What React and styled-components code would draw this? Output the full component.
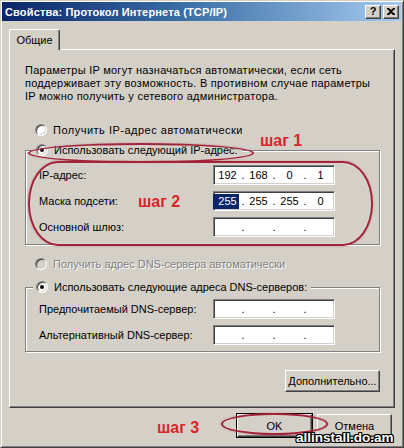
import React from 'react';
import styled, { createGlobalStyle } from 'styled-components';

const GlobalStyle = createGlobalStyle`
  html, body {
    margin: 0;
    padding: 0;
  }
  body {
    background: #d4d0c8;
    font-family: "Liberation Sans", Arial, sans-serif;
    font-size: 11px;
    color: #000;
  }
`;

const Window = styled.div`
  position: relative;
  width: 404px;
  height: 448px;
  box-sizing: border-box;
  background: #d4d0c8;
  border: 1px solid;
  border-color: #d4d0c8 #404040 #404040 #d4d0c8;
  box-shadow: inset 1px 1px #fff, inset -1px -1px #808080;
  padding: 1px 2px 2px 1px;
  display: flex;
  flex-direction: column;
  overflow: hidden;
`;

const TitleBar = styled.div`
  height: 19px;
  display: flex;
  align-items: center;
  padding: 0 2px 0 3px;
  background: linear-gradient(90deg, #0a246a 0%, #3a6ea5 45%, #a6caf0 100%);
`;

const Title = styled.div`
  flex: 1;
  color: #fff;
  font-weight: bold;
  font-size: 11px;
  letter-spacing: 0.15px;
  white-space: nowrap;
`;

const CaptionButton = styled.div`
  width: 16px;
  height: 14px;
  box-sizing: border-box;
  margin-left: ${p => p.$gap || 0}px;
  display: flex;
  align-items: center;
  justify-content: center;
  background: #d4d0c8;
  border: 1px solid;
  border-color: #fff #404040 #404040 #fff;
  box-shadow: inset -1px -1px #808080;
  font-weight: bold;
  font-size: 11px;
  line-height: 1;
`;

const Body = styled.div`
  display: flex;
  flex-direction: column;
  padding: 8px 6px 0 7px;
`;

const TabStrip = styled.div`
  display: flex;
`;

const Tab = styled.div`
  position: relative;
  z-index: 1;
  width: 51px;
  height: 21px;
  box-sizing: border-box;
  margin-bottom: -1px;
  display: flex;
  align-items: center;
  justify-content: center;
  background: #d4d0c8;
  border: 1px solid;
  border-color: #fff #404040 transparent #fff;
  border-bottom: none;
  border-radius: 2px 3px 0 0;
  box-shadow: inset -1px 0 #808080;
`;

const Panel = styled.div`
  height: 359px;
  box-sizing: border-box;
  display: flex;
  flex-direction: column;
  padding: 14px 14px 0 15px;
  border: 1px solid;
  border-color: #fff #404040 #404040 #fff;
  box-shadow: inset -1px -1px #808080;
`;

const Intro = styled.div`
  line-height: 13px;
  letter-spacing: 0.25px;
  white-space: nowrap;
`;

const RadioRow = styled.div`
  display: flex;
  align-items: center;
  height: 14px;
  margin-top: ${p => p.$top}px;
  margin-left: 10px;
  letter-spacing: ${p => p.$spread || 0}px;
  color: ${p => (p.$disabled ? '#808080' : '#000')};
  text-shadow: ${p => (p.$disabled ? '1px 1px 0 #fff' : 'none')};
  white-space: nowrap;
`;

const RadioDot = styled.span`
  position: relative;
  width: 12px;
  height: 12px;
  box-sizing: border-box;
  flex: none;
  margin-right: 6px;
  border-radius: 50%;
  background: ${p => (p.$disabled ? '#d4d0c8' : '#fff')};
  border: 1px solid;
  border-color: #808080 #fff #fff #808080;
  box-shadow: inset 1px 1px #404040, inset -1px -1px #d4d0c8;
  &::after {
    content: '';
    display: ${p => (p.$checked ? 'block' : 'none')};
    position: absolute;
    left: 3px;
    top: 3px;
    width: 4px;
    height: 4px;
    border-radius: 50%;
    background: #000;
  }
`;

const Group = styled.div`
  position: relative;
  margin-top: ${p => p.$top}px;
  padding: ${p => p.$pt}px 0 ${p => p.$pb}px 13px;
  display: flex;
  flex-direction: column;
  gap: 6px;
  border: 1px solid #808080;
  box-shadow: inset 1px 1px #fff, 1px 1px #fff;
`;

const Legend = styled.div`
  position: absolute;
  left: 7px;
  top: -8px;
  height: 14px;
  display: flex;
  align-items: center;
  padding: 0 4px 0 3px;
  background: #d4d0c8;
  white-space: nowrap;
`;

const FieldRow = styled.div`
  display: grid;
  grid-template-columns: 174px 122px;
  align-items: center;
`;

const IpBox = styled.div`
  height: 20px;
  box-sizing: border-box;
  display: grid;
  grid-template-columns: 23px 8px 23px 8px 23px 8px 23px;
  align-items: center;
  padding-left: 2px;
  background: #fff;
  border: 1px solid;
  border-color: #808080 #fff #fff #808080;
  box-shadow: inset 1px 1px #404040, inset -1px -1px #d4d0c8;
`;

const Seg = styled.span`
  text-align: center;
  line-height: 15px;
  color: ${p => (p.$selected ? '#fff' : '#000')};
  background: ${p => (p.$selected ? '#0a246a' : 'transparent')};
  margin-left: ${p => (p.$selected ? '-3px' : '0')};
  padding-left: ${p => (p.$selected ? '3px' : '0')};
`;

const Dot = styled.span`
  text-align: center;
`;

const Button = styled.div`
  width: ${p => p.$w}px;
  height: ${p => p.$h}px;
  box-sizing: border-box;
  display: flex;
  align-items: center;
  justify-content: center;
  background: #d4d0c8;
  border: 1px solid;
  border-color: #fff #404040 #404040 #fff;
  box-shadow: inset -1px -1px #808080;
  outline: ${p => (p.$default ? '1px solid #000' : 'none')};
`;

const AdvancedRow = styled.div`
  display: flex;
  justify-content: flex-end;
  margin-top: 18px;
`;

const Footer = styled.div`
  display: flex;
  justify-content: flex-end;
  gap: 5px;
  margin-top: 6px;
  padding-right: 3px;
`;

const Mark = styled.div`
  position: absolute;
  left: ${p => p.$x}px;
  top: ${p => p.$y}px;
  width: ${p => p.$w}px;
  height: ${p => p.$h}px;
  box-sizing: border-box;
  border: 2px solid #a3243a;
  border-radius: ${p => p.$r};
  box-shadow: 0 0 2px rgba(163, 36, 58, 0.45), inset 0 0 2px rgba(255, 255, 255, 0.5);
  pointer-events: none;
`;

const Step = styled.div`
  position: absolute;
  left: ${p => p.$x}px;
  top: ${p => p.$y}px;
  font-family: "Liberation Sans", Arial, sans-serif;
  font-weight: bold;
  font-size: 16px;
  line-height: 16px;
  color: #d8262a;
  white-space: nowrap;
`;

const Watermark = styled.div`
  position: absolute;
  left: 295px;
  top: 430px;
  font-family: "Liberation Sans", Arial, sans-serif;
  font-weight: bold;
  font-size: 13.5px;
  line-height: 14px;
  color: #fff;
  white-space: nowrap;
  text-shadow:
    -1px -1px 0 #000, 1px -1px 0 #000, -1px 1px 0 #000, 1px 1px 0 #000,
    0 -1px 0 #000, 0 1px 0 #000, -1px 0 0 #000, 1px 0 0 #000;
`;

const Radio = ({ checked, disabled }) => (
  <RadioDot $checked={checked} $disabled={disabled} />
);

const IpField = ({ parts = ['', '', '', ''], selected }) => (
  <IpBox>
    <Seg $selected={selected}>{parts[0]}</Seg>
    <Dot>.</Dot>
    <Seg>{parts[1]}</Seg>
    <Dot>.</Dot>
    <Seg>{parts[2]}</Seg>
    <Dot>.</Dot>
    <Seg>{parts[3]}</Seg>
  </IpBox>
);

const CloseGlyph = () => (
  <svg width="8" height="7" viewBox="0 0 8 7">
    <path d="M0 0h2l2 2 2-2h2v1L5 3.5 8 6v1H6L4 5 2 7H0V6l3-2.5L0 1z" fill="#000" />
  </svg>
);

export default function App() {
  return (
    <>
      <GlobalStyle />
      <Window>
        <TitleBar>
          <Title>Свойства: Протокол Интернета (TCP/IP)</Title>
          <CaptionButton>?</CaptionButton>
          <CaptionButton $gap={2}><CloseGlyph /></CaptionButton>
        </TitleBar>

        <Body>
          <TabStrip>
            <Tab>Общие</Tab>
          </TabStrip>
          <Panel>
            <Intro>
              Параметры IP могут назначаться автоматически, если сеть<br />
              поддерживает эту возможность. В противном случае параметры<br />
              IP можно получить у сетевого администратора.
            </Intro>

            <RadioRow $top={20} $spread={0.5}>
              <Radio />Получить IP-адрес автоматически
            </RadioRow>

            <Group $top={13} $pt={14} $pb={7}>
              <Legend><Radio checked />Использовать следующий IP-адрес:</Legend>
              <FieldRow>
                <span>IP-адрес:</span>
                <IpField parts={['192', '168', '0', '1']} />
              </FieldRow>
              <FieldRow>
                <span>Маска подсети:</span>
                <IpField parts={['255', '255', '255', '0']} selected />
              </FieldRow>
              <FieldRow>
                <span>Основной шлюз:</span>
                <IpField />
              </FieldRow>
            </Group>

            <RadioRow $top={12} $disabled>
              <Radio disabled />Получить адрес DNS-сервера автоматически
            </RadioRow>

            <Group $top={16} $pt={11} $pb={6}>
              <Legend><Radio checked />Использовать следующие адреса DNS-серверов:</Legend>
              <FieldRow>
                <span>Предпочитаемый DNS-сервер:</span>
                <IpField />
              </FieldRow>
              <FieldRow>
                <span>Альтернативный DNS-сервер:</span>
                <IpField />
              </FieldRow>
            </Group>

            <AdvancedRow>
              <Button $w={95} $h={22}>Дополнительно...</Button>
            </AdvancedRow>
          </Panel>

          <Footer>
            <Button $w={75} $h={23} $default>OK</Button>
            <Button $w={75} $h={23}>Отмена</Button>
          </Footer>
        </Body>

        <Mark $x={27} $y={142} $w={226} $h={20} $r="50%" />
        <Mark $x={27} $y={160} $w={345} $h={85} $r="30px / 42px" />
        <Mark $x={220} $y={412} $w={107} $h={22} $r="50%" />
        <Step $x={259} $y={132}>шаг 1</Step>
        <Step $x={137} $y={193}>шаг 2</Step>
        <Step $x={156} $y={419}>шаг 3</Step>
        <Watermark>allinstall.do.am</Watermark>
      </Window>
    </>
  );
}
